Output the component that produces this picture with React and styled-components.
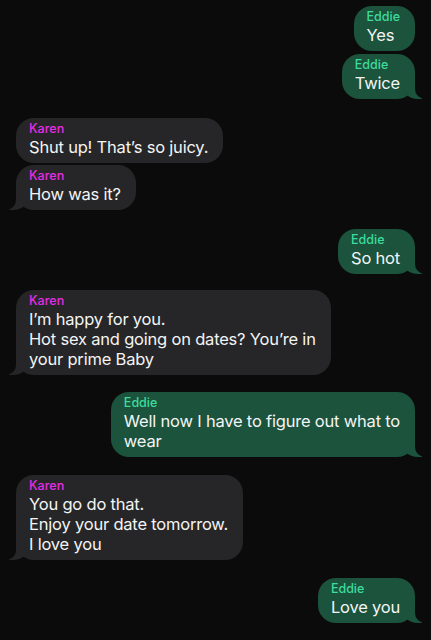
import React from 'react';
import styled, { createGlobalStyle, css } from 'styled-components';

const PAGE_BG = '#0b0b0b';

const GlobalStyle = createGlobalStyle`
  html, body {
    margin: 0;
    padding: 0;
    background: ${PAGE_BG};
  }
  body {
    font-family: Inter, "Liberation Sans", Arial, sans-serif;
    -webkit-font-smoothing: antialiased;
  }
`;

const people = {
  eddie: { name: 'Eddie', side: 'right' },
  karen: { name: 'Karen', side: 'left' }
};

// each entry: who, gap above, lines, whether it ends a run (tail)
const messages = [
  { from: 'eddie', gap: 0, lines: ['Yes'] },
  { from: 'eddie', gap: 3, lines: ['Twice'], tail: true },
  { from: 'karen', gap: 19, lines: ['Shut up! That’s so juicy.'] },
  { from: 'karen', gap: 2, lines: ['How was it?'], tail: true },
  { from: 'eddie', gap: 19, lines: ['So hot'], tail: true },
  {
    from: 'karen',
    gap: 16,
    lines: ['I’m happy for you.', 'Hot sex and going on dates? You’re in', 'your prime Baby'],
    tail: true
  },
  { from: 'eddie', gap: 17, lines: ['Well now I have to figure out what to', 'wear'], tail: true },
  {
    from: 'karen',
    gap: 18,
    lines: ['You go do that.', 'Enjoy your date tomorrow.', 'I love you'],
    tail: true
  },
  { from: 'eddie', gap: 18, lines: ['Love you'], tail: true }
];

const Thread = styled.main`
  min-height: 640px;
  box-sizing: border-box;
  padding: 6px 16px 0;
  display: flex;
  flex-direction: column;
  background: ${PAGE_BG};
`;

const Row = styled.div`
  display: flex;
  justify-content: ${({ $side }) => ($side === 'right' ? 'flex-end' : 'flex-start')};
  margin-top: ${({ $gap }) => $gap}px;
`;

const rightTail = css`
  &::before {
    content: '';
    position: absolute;
    bottom: 0;
    right: -7px;
    width: 20px;
    height: 20px;
    background: #1b533d;
    border-bottom-left-radius: 16px 14px;
    z-index: 0;
  }
  &::after {
    content: '';
    position: absolute;
    bottom: 0;
    right: -10px;
    width: 10px;
    height: 20px;
    background: ${PAGE_BG};
    border-bottom-left-radius: 10px;
    z-index: 1;
  }
`;

const leftTail = css`
  &::before {
    content: '';
    position: absolute;
    bottom: 0;
    left: -7px;
    width: 20px;
    height: 20px;
    background: #262628;
    border-bottom-right-radius: 16px 14px;
    z-index: 0;
  }
  &::after {
    content: '';
    position: absolute;
    bottom: 0;
    left: -10px;
    width: 10px;
    height: 20px;
    background: ${PAGE_BG};
    border-bottom-right-radius: 10px;
    z-index: 1;
  }
`;

const Bubble = styled.div`
  position: relative;
  max-width: 330px;
  padding: 4px 15px 6px 13px;
  border-radius: 18px;
  background: ${({ $side }) => ($side === 'right' ? '#1b533d' : '#262628')};
  ${({ $tail, $side }) => $tail && ($side === 'right' ? rightTail : leftTail)}
`;

const Name = styled.div`
  position: relative;
  z-index: 2;
  font-size: 12.5px;
  line-height: 13px;
  font-weight: 500;
  margin-bottom: 2px;
  color: ${({ $side }) => ($side === 'right' ? '#3ddc9c' : '#e32de4')};
`;

const Text = styled.div`
  position: relative;
  z-index: 2;
  font-size: 16.5px;
  letter-spacing: -0.2px;
  line-height: 20px;
  color: #f4f4f4;
  white-space: nowrap;
`;

function Message({ from, gap, lines, tail }) {
  const { name, side } = people[from];
  return (
    <Row $side={side} $gap={gap}>
      <Bubble $side={side} $tail={tail}>
        <Name $side={side}>{name}</Name>
        {lines.map((line, i) => (
          <Text key={i}>{line}</Text>
        ))}
      </Bubble>
    </Row>
  );
}

export default function App() {
  return (
    <>
      <GlobalStyle />
      <Thread>
        {messages.map((m, i) => (
          <Message key={i} {...m} />
        ))}
      </Thread>
    </>
  );
}
